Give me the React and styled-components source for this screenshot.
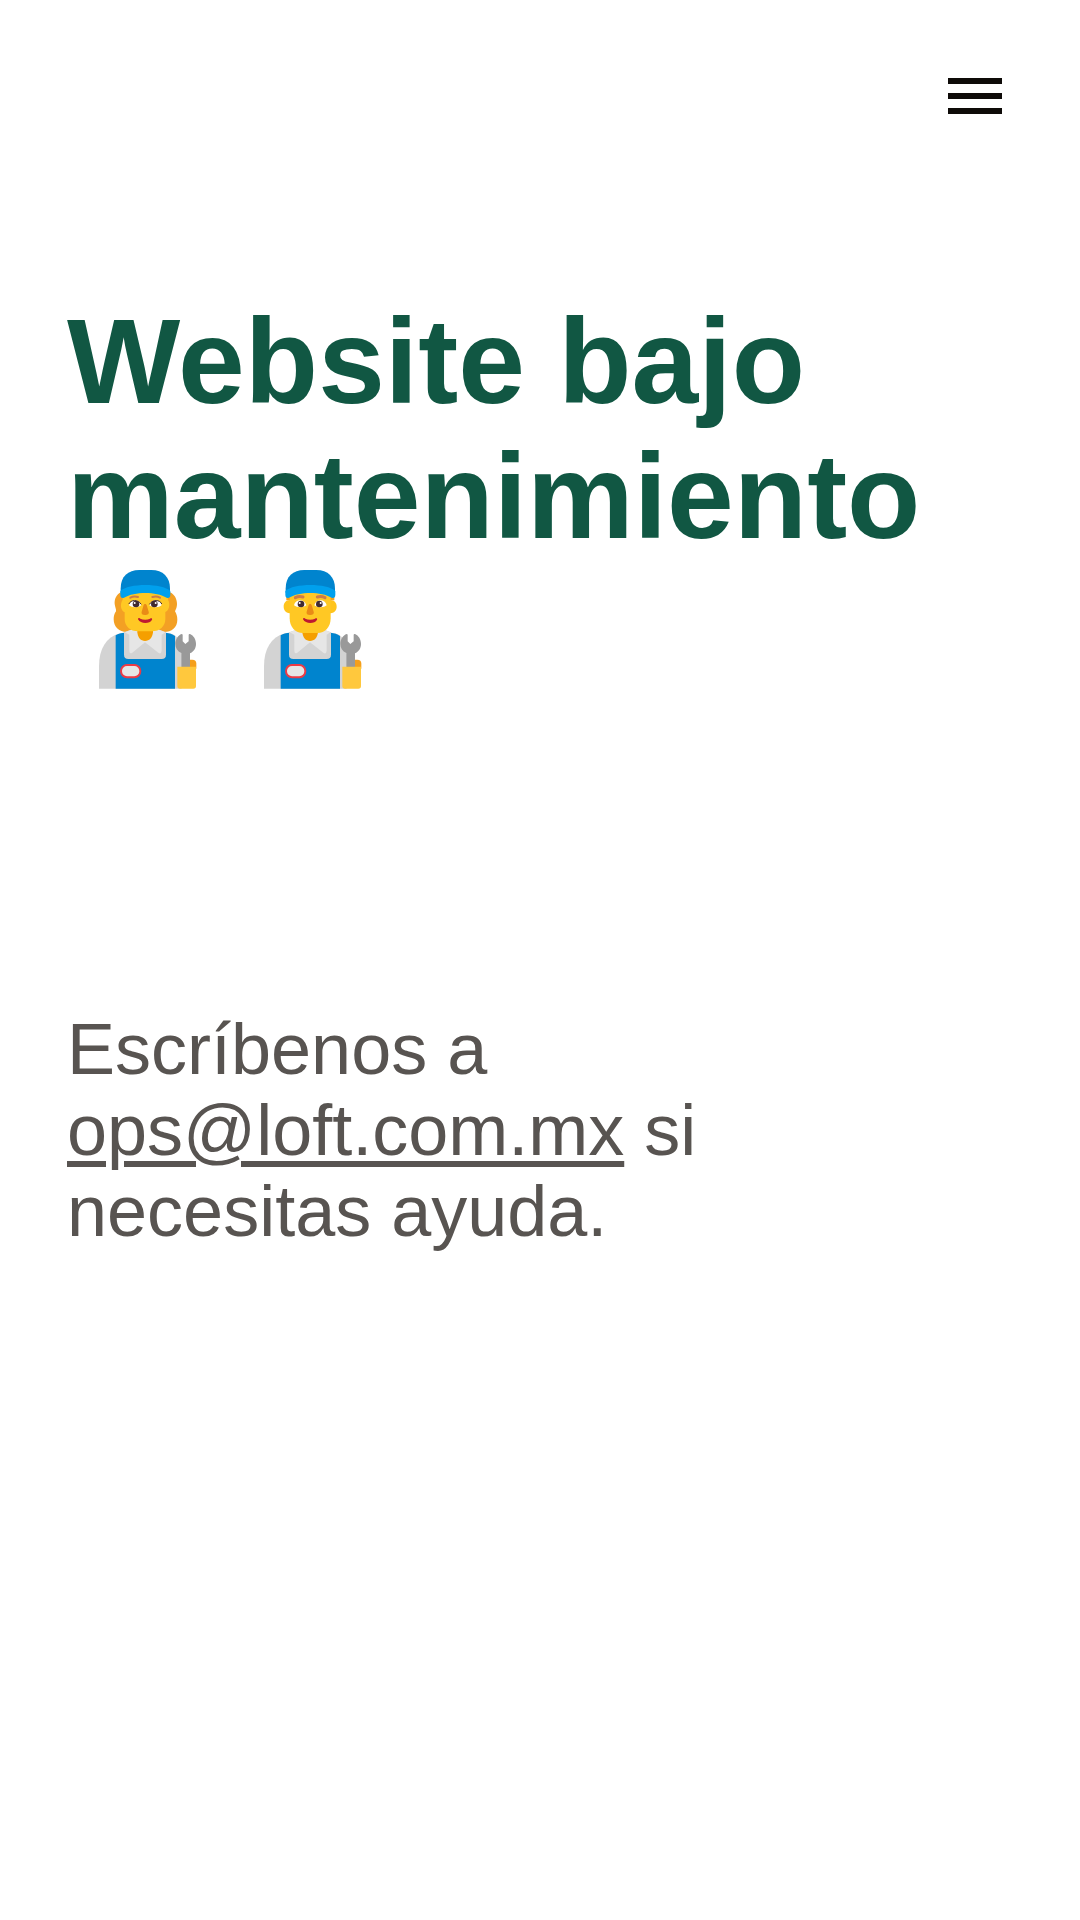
import React from 'react';
import styled, { createGlobalStyle } from 'styled-components';

const GlobalStyle = createGlobalStyle`
  * {
    box-sizing: border-box;
  }

  body {
    margin: 0;
    background: #fff;
    font-family: "Liberation Sans", Arial, sans-serif;
  }
`;

const Header = styled.header`
  display: flex;
  justify-content: flex-end;
  padding: 78px 78px 0;
`;

const MenuButton = styled.button`
  display: flex;
  flex-direction: column;
  gap: 9px;
  width: 54px;
  padding: 0;
  border: 0;
  background: none;
  cursor: pointer;
`;

const Bar = styled.span`
  height: 6px;
  background: #0e0b08;
`;

const Main = styled.main`
  display: flex;
  flex-direction: column;
  gap: 310px;
  padding: 180px 67px 67px;
`;

const Title = styled.h1`
  margin: 0;
  color: #115743;
  font-size: 120px;
  font-weight: 700;
  line-height: 135px;
`;

const Emojis = styled.span`
  display: flex;
`;

const Emoji = styled.svg`
  width: 165px;
  height: 135px;
`;

const Contact = styled.p`
  max-width: 720px;
  margin: 0;
  color: #585451;
  font-size: 72px;
  line-height: 81px;
`;

const MailLink = styled.a`
  color: inherit;
  text-decoration: underline;
  text-decoration-thickness: 6px;
  text-underline-offset: 6px;
`;

const Hair = () => (
  <path
    fill="#F3A024"
    d="M124 96C108 104 103 118 104 132C105 141 109 147 108 154C103 161 101 169 101 178C101 202 118 216 140 216H252C275 216 292 202 292 179C292 168 289 161 285 154C288 147 291 141 291 132C291 116 283 103 270 97Z"
  />
);

const Ears = () => (
  <g>
    <path
      fill="#FFC41C"
      d="M140 120C124 118 116 127 116 140C116 153 125 160 140 160ZM251 120C267 118 275 127 275 140C275 153 266 160 251 160Z"
    />
    <path fill="#F59F1B" d="M124 98H140V121H124ZM251 98H268V121H251Z" />
  </g>
);

const Worker = ({ label, woman }) => (
  <Emoji viewBox="-39 12 495 405" role="img" aria-label={label}>
    {woman ? <Hair /> : <Ears />}
    <path
      fill="#D3D3D3"
      d="M57 386V318C57 268 78 231 120 220H270C294 226 305 246 305 282V386Z"
    />
    <path
      fill="#0084CE"
      d="M107 386V226C115 221 124 219 133 218H257C268 219 277 222 285 228V386Z"
    />
    <path
      fill="#D3D3D3"
      d="M132 217L160 207H231L258 217V284Q258 297 245 297H145Q132 297 132 284Z"
    />
    <path
      fill="#E6E6E6"
      d="M134 217L160 207H232L256 217L245 224V272Q243 285 235 278L195 247L157 278Q149 284 148 272V224Z"
    />
    <path fill="#F59F00" d="M172 204H219V217C217 234 208 243 195 243C182 243 174 234 172 217Z" />
    <path
      fill="#FFC824"
      d={
        woman
          ? 'M128 98H264V119C272 132 267 152 256 156V177C256 199 239 214 216 214H174C151 214 134 199 134 177V157C122 151 119 133 128 119Z'
          : 'M134 98H257V175C257 202 240 219 217 219H174C151 219 134 202 134 175Z'
      }
    />
    <path
      fill="none"
      stroke="#CC7C48"
      strokeWidth={woman ? 6 : 9}
      strokeLinecap="round"
      d="M151 113Q162 107 174 111M217 111Q229 107 240 113"
    />
    <path
      fill="#FFF"
      d="M147 136C151 117 178 115 184 136C175 144 156 144 147 136ZM208 136C214 115 241 117 245 136C237 144 217 144 208 136Z"
    />
    <circle cx="168" cy="132" r="10" fill="#402A32" />
    <circle cx="223" cy="132" r="10" fill="#402A32" />
    <circle cx="164" cy="129" r="3" fill="#FFF" />
    <circle cx="227" cy="129" r="3" fill="#FFF" />
    {woman && (
      <path
        fill="none"
        stroke="#402A32"
        strokeWidth="3"
        strokeLinecap="round"
        d="M147 131C152 119 174 117 183 132M209 132C218 117 240 119 245 131"
      />
    )}
    <path
      fill="#E98B16"
      d="M195 132C198 132 200 134 201 138L206 155C208 161 203 165 195 165C187 165 183 161 185 155L190 138C191 134 193 132 195 132Z"
    />
    <path
      fill="#BE1931"
      d="M174 178C174 174 178 173 181 176C189 180 202 180 210 176C214 173 218 175 216 179C210 192 182 193 174 178Z"
    />
    <path
      fill="#0084CE"
      d="M122 98V86C122 49 144 30 178 30H214C249 30 270 51 270 86V98Z"
    />
    <path
      fill="#00A0ED"
      d="M121 93C146 69 246 69 271 93V104C271 112 266 116 260 113C229 94 163 94 132 113C126 116 121 112 121 104Z"
    />
    <rect
      x="123"
      y="315"
      width="58"
      height="37"
      rx="18"
      fill="#E6E6E6"
      stroke="#EC3A45"
      strokeWidth="6"
    />
    <path fill="#F59F1B" d="M322 299H337Q349 299 349 311V326H322Z" />
    <path
      fill="#999"
      d="M304 322V279C292 274 286 264 286 252C286 238 294 226 305 222Q308 222 308 225V244L316 252L326 244V225Q326 221 330 222C341 227 348 238 348 252C348 265 341 275 330 280V322Z"
    />
    <path fill="#FFC83D" d="M292 320H348V378Q348 386 340 386H300Q292 386 292 378Z" />
  </Emoji>
);

const App = () => {
  return (
    <>
      <GlobalStyle />
      <Header>
        <MenuButton type="button" aria-label="Abrir menú">
          <Bar />
          <Bar />
          <Bar />
        </MenuButton>
      </Header>
      <Main>
        <Title>
          Website bajo mantenimiento
          <Emojis>
            <Worker label="Mecánica" woman />
            <Worker label="Mecánico" />
          </Emojis>
        </Title>
        <Contact>
          Escríbenos a <MailLink href="mailto:ops@loft.com.mx">ops@loft.com.mx</MailLink> si
          necesitas ayuda.
        </Contact>
      </Main>
    </>
  );
};

export default App;
